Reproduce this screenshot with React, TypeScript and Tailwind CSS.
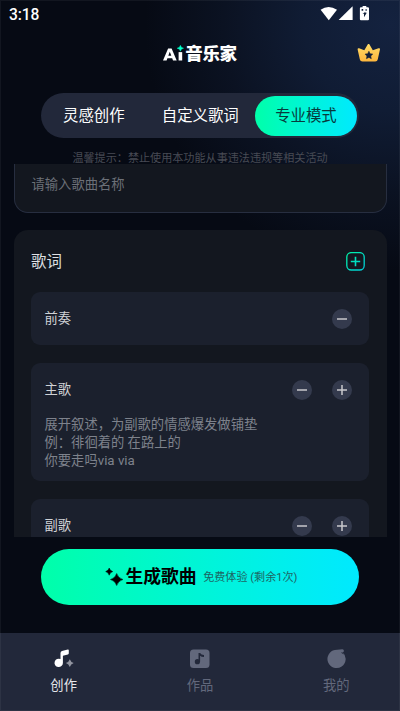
import React from "react";

const tabs = [
  { label: "灵感创作", active: false },
  { label: "自定义歌词", active: false },
  { label: "专业模式", active: true },
];

function StatusBar() {
  return (
    <div className="flex h-7 items-center justify-between pl-[9px] pr-[30px] text-white">
      <span className="pt-[2px] font-[Roboto] text-[15.6px] font-medium leading-7 tracking-[-0.1px]">3:18</span>
      <svg width="50" height="16" viewBox="0 0 50 16" fill="currentColor" className="-mt-px">
        <path d="M.6 3.8Q8.5-1.8 17 3.8L8.8 14.2Z" />
        <path d="M32.6.3V14H18.6Z" />
        <path d="M41 1.2h1.6V0h3.7v1.2h1.6q1.1 0 1.1 1.1v10.9q0 1.1-1.1 1.1H41q-1.1 0-1.1-1.1V2.3q0-1.1 1.1-1.1Z" />
        <path d="M45.6 5.8 42.5 7.8H44v3.4l2.8-4.4h-1.6ZM41.6 3h1.6v1.8h-1.6ZM45.5 3.2h1.3v1.6h-1.3Z" fill="#12203a" />
      </svg>
    </div>
  );
}

function Header() {
  return (
    <header className="relative flex h-[52px] items-center justify-center text-white">
      <div className="flex items-center pt-[1px] leading-none">
        <svg width="22" height="18" viewBox="0 0 22 18" className="-mt-[1px]">
          <path d="M0 15.500 5.100 3.500h3.500l5.100 12H10l-.8-2.200H4.400l-.8 2.200ZM5.300 10.700h3L6.800 6.700Z" fill="white" fillRule="evenodd" />
          <path d="M15.600 7.100h3.600v8.400h-3.600Z" fill="white" />
          <path d="m17.400.3 1 2 2.200.9-2.200 1-1 2-1-2-2.300-1 2.300-.9Z" fill="#00ffc8" stroke="#00ffc8" strokeWidth=".4" />
        </svg>
        <span className="pt-[1px] text-[17.5px] font-black tracking-[-0.4px]">音乐家</span>
      </div>
      <svg width="24" height="20" viewBox="0 0 24 20" className="absolute left-[357px] top-[16px]">
        <defs>
          <linearGradient id="gold" x2="0" y2="1">
            <stop stopColor="#ffdc68" />
            <stop offset="1" stopColor="#fdb63d" />
          </linearGradient>
        </defs>
        <path d="M10.7.4q.9-1.2 1.800 0l3.300 5.800 5.700-1.900q1.900-.5 1.400 1.500l-2.100 9.400q-.3 2.400-2.600 2.400H5.500q-2.300 0-2.700-2.400L.7 5.800q-.4-2 1.400-1.500l5.200 1.900Z" fill="url(#gold)" />
        <path d="m11.900 7.200 1.200 2.500 2.700.4-2 1.900.5 2.700-2.400-1.300-2.500 1.300.5-2.700-1.900-1.900 2.700-.4Z" fill="#152139" stroke="#152139" strokeWidth=".5" />
      </svg>
    </header>
  );
}

function Round({ plus = false }: { plus?: boolean }) {
  return (
    <svg width="20" height="20" viewBox="0 0 20 20">
      <circle cx="10" cy="10" r="10" fill="#343a4d" />
      <path d={plus ? "M5 10h10M10 5v10" : "M5 10h10"} stroke="#c9c9cd" strokeWidth="1.5" />
    </svg>
  );
}

function Section({ title, plus, children, className = "" }: { title: string; plus?: boolean; children?: React.ReactNode; className?: string }) {
  return (
    <section className={`shrink-0 rounded-[9px] bg-[#1b202d] pl-[13.5px] pr-[17px] ${className}`}>
      <div className="flex h-[53px] items-center justify-between text-[13.3px] text-[#d0d2d6]">
        <span>{title}</span>
        <div className="flex gap-5">
          <Round />
          {plus && <Round plus />}
        </div>
      </div>
      {children}
    </section>
  );
}

function GenerateButton() {
  return (
    <button className="mx-[41px] mt-[11.5px] flex h-[56px] shrink-0 items-center rounded-full bg-linear-to-r from-[#00ffa9] to-[#00e9ff] pl-[64px] text-black">
      <svg width="19" height="20" viewBox="0 0 19 20">
        <path d="M11.7 6.5q1.4 4.700 6.200 6-4.800 1.300-6.200 6-1.400-4.700-6.200-6 4.800-1.300 6.200-6ZM4.200 1q.7 2.800 3.500 3.600-2.800.8-3.500 3.600Q3.500 5.400.7 4.600 3.500 3.800 4.200 1Z" stroke="black" strokeWidth=".5" strokeLinejoin="round" />
      </svg>
      <span className="ml-[1.5px] pt-[1px] text-[17.8px] font-bold">生成歌曲</span>
      <span className="ml-[6.5px] whitespace-nowrap pt-[3px] text-[11.1px] text-[#1e6563]">免费体验 (剩余1次)</span>
    </button>
  );
}

function Nav() {
  const item = "flex flex-1 flex-col items-center pt-[15px] text-[13.3px] leading-5";
  return (
    <nav className="flex h-[78px] shrink-0 bg-[#22283a] text-[#62687c]">
      <div className={`${item} -translate-x-[3px] text-[#e5e6ea]`}>
        <svg width="22" height="22" viewBox="0 0 22 22" className="mb-[6px] -translate-x-[0.5px]">
          <path d="M8 5q0-1.500 1.500-1.900l5.800-1.500q1-.2 1 .8v2.800q0 1-.9 1.300l-5 1.300v7.100a4.200 4.200 0 1 1-2.400-3.800Z" fill="white" />
          <path d="M17.3 11.200q1 2.900 3.900 3.900-2.900 1-3.900 3.900-1-2.900-3.900-3.900 2.900-1 3.900-3.900Z" fill="#9295a0" />
        </svg>
        创作
      </div>
      <div className={item}>
        <svg width="22" height="22" viewBox="0 0 22 22" className="mb-[6px]">
          <rect x="1" y="1.500" width="19.500" height="18.500" rx="3.500" fill="#62687c" />
          <circle cx="8.400" cy="13.700" r="2.600" fill="#22283a" />
          <path d="M9.500 5h1.600q1 1.800 3.900 2v2.100q-2.800-.1-3.900-1.300v5.900H9.500Z" fill="#22283a" />
        </svg>
        作品
      </div>
      <div className={`${item} translate-x-[3px]`}>
        <svg width="22" height="22" viewBox="0 0 22 22" className="mb-[6px] -translate-x-[0.5px]">
          <path d="M10.300 2 17.800 1.200q1.600-.1 1.600 1.600 0 1.200-1 1.600a9.100 9.100 0 1 1-8.100-2.400Z" fill="#62687c" />
          <path d="m16.300 4.600 2.200-.1.800 2Z" fill="#22283a" />
        </svg>
        我的
      </div>
    </nav>
  );
}

export default function App() {
  return (
    <main className="relative flex h-[711px] w-[400px] flex-col overflow-hidden bg-[#060a14] bg-[radial-gradient(ellipse_245px_245px_at_390px_25px,#14223f_0%,#101c34_35%,#0b1222_68%,#060a14_100%)] font-[Roboto,'Noto_Sans_CJK_SC',sans-serif]">
      <StatusBar />
      <Header />
      <div className="ml-[41px] mt-[13px] flex h-[45px] w-[318px] shrink-0 items-center justify-between rounded-full bg-[#22283a] pl-[22px] pr-[2px] text-[15.4px]">
        {tabs.map((tab) => (
          <div
            key={tab.label}
            className={tab.active ? "-ml-[21px] flex h-[40px] w-[102px] items-center justify-center rounded-full bg-linear-to-r from-[#00ffa9] to-[#00e9ff] pt-[2px] text-[#073a3c]" : "pt-[2px] text-white"}
          >
            {tab.label}
          </div>
        ))}
      </div>
      <p className="mt-[13px] h-[13px] shrink-0 text-center text-[11.1px] leading-[16px] text-[#484b54]">温馨提示：禁止使用本功能从事违法违规等相关活动</p>
      <div className="mx-[13.5px] flex h-[373px] shrink-0 flex-col overflow-hidden">
        <div className="h-[48.5px] shrink-0 rounded-b-[14px] border border-t-0 border-[#272e40] bg-[#13171f] pl-[17px] text-[13.3px] leading-[42px] text-[#6c7078]">请输入歌曲名称</div>
        <div className="mt-[17.5px] flex h-[340px] shrink-0 flex-col rounded-t-[14px] bg-[#13171f] px-[17.5px]">
          <div className="flex h-[62px] shrink-0 items-center justify-between pr-[4px] text-[15.4px] text-[#dfe0e3]">
            <span className="pt-[3px]">歌词</span>
            <svg width="19" height="19" viewBox="0 0 19 19" fill="none" stroke="url(#add)">
              <defs>
                <linearGradient id="add" gradientUnits="userSpaceOnUse" x1="0" y1="0" x2="19" y2="19">
                  <stop stopColor="#00f5a4" />
                  <stop offset="1" stopColor="#00c9dc" />
                </linearGradient>
              </defs>
              <rect x=".8" y=".6" width="17.400" height="17.400" rx="4.500" strokeWidth="1.300" />
              <path d="M4.800 9.500h9.410M9.500 4.800v9.410" strokeWidth="1.600" />
            </svg>
          </div>
          <Section title="前奏" />
          <Section title="主歌" plus className="mt-[18px] h-[118px]">
            <div className="text-[13.3px] leading-[18px] text-[#7e828c]">
              <p>展开叙述，为副歌的情感爆发做铺垫</p>
              <p>例：徘徊着的 在路上的</p>
              <p>你要走吗via via</p>
            </div>
          </Section>
          <Section title="副歌" plus className="mt-[18px]" />
        </div>
      </div>
      <GenerateButton />
      <div className="h-[28.5px] shrink-0" />
      <Nav />
      <div className="pointer-events-none absolute inset-0 border border-white/5" />
    </main>
  );
}
